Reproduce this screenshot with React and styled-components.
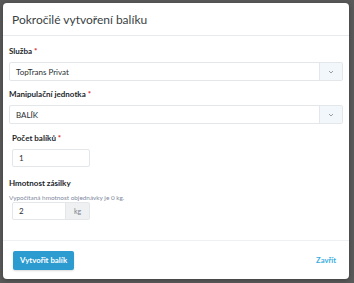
import React from 'react'
import styled, { createGlobalStyle } from 'styled-components'

const Global = createGlobalStyle`
  html, body { margin: 0; padding: 0; }
  body {
    background: #595959;
    font-family: Lato, "Open Sans", "Liberation Sans", sans-serif;
    width: 354px;
    height: 283px;
    overflow: hidden;
  }
`

const Backdrop = styled.div`
  width: 354px;
  height: 283px;
  padding: 3px 5px 4px 3px;
  box-sizing: border-box;
`

const Modal = styled.div`
  background: #fff;
  border-radius: 4px;
  height: 100%;
  display: flex;
  flex-direction: column;
  box-shadow: 0 1px 4px rgba(0,0,0,0.3);
`

const Header = styled.div`
  height: 32px;
  padding: 0 9px;
  display: flex;
  align-items: center;
  border-bottom: 1px solid #e8ebee;
`

const Title = styled.h4`
  margin: 0;
  font-size: 12px;
  font-weight: 400;
  color: #3a3f44;
`

const Body = styled.div`
  flex: 1;
  padding: 10px 6px 0 6px;
  border-bottom: 1px solid #eef0f2;
`

const Group = styled.div`
  margin-bottom: ${p => p.$mb || 8}px;
  padding-left: ${p => (p.$indent ? 3 : 0)}px;
`

const Label = styled.div`
  font-size: 8px;
  font-weight: 700;
  color: #22262a;
  margin-bottom: 6px;
  span { color: #d8282f; }
`

const Help = styled.div`
  font-size: 6.4px;
  color: #7f8a9e;
  margin: 1px 0 1px;
`

const SelectBox = styled.div`
  display: flex;
  height: 19px;
  border: 1px solid #e3e7ea;
  border-radius: 2px;
  box-sizing: border-box;
`

const SelectText = styled.div`
  flex: 1;
  padding-left: 6px;
  font-size: 8px;
  color: #2b2f33;
  display: flex;
  align-items: center;
`

const Caret = styled.div`
  width: 22px;
  background: #f2f7fb;
  border-left: 1px solid #e3e7ea;
  display: flex;
  align-items: center;
  justify-content: center;
`

const InputGroup = styled.div`
  display: flex;
  width: 78px;
  height: 18px;
  margin-left: ${p => (p.$inset ? 3 : 0)}px;
  border: 1px solid #e3e7ea;
  border-radius: 2px;
  box-sizing: border-box;
`

const Input = styled.div`
  flex: 1;
  padding-left: 6px;
  font-size: 8px;
  color: #2b2f33;
  display: flex;
  align-items: center;
`

const Addon = styled.div`
  width: 23px;
  background: #eef0f2;
  border-left: 1px solid #e3e7ea;
  font-size: 7px;
  color: #7b838c;
  display: flex;
  align-items: center;
  justify-content: center;
`

const Footer = styled.div`
  height: 38px;
  padding: 0 13px 0 10px;
  display: flex;
  align-items: center;
  justify-content: space-between;
`

const Primary = styled.button`
  height: 19px;
  padding: 0 7px;
  border: none;
  border-radius: 2px;
  background: #2b9bd0;
  color: #fff;
  font-family: inherit;
  font-size: 7.8px;
  font-weight: 700;
  box-shadow: 0 1px 2px rgba(0,0,0,0.15);
`

const Link = styled.a`
  font-size: 7.6px;
  font-weight: 700;
  color: #3aaee0;
`

const Chevron = () => (
  <svg width="6" height="4" viewBox="0 0 6 4">
    <path d="M1 1l2 2 2-2" fill="none" stroke="#8a94a0" strokeWidth="0.9" />
  </svg>
)

export default function App() {
  return (
    <>
      <Global />
      <Backdrop>
        <Modal>
          <Header>
            <Title>Pokročilé vytvoření balíku</Title>
          </Header>
          <Body>
            <Group>
              <Label>Služba <span>*</span></Label>
              <SelectBox>
                <SelectText>TopTrans Privat</SelectText>
                <Caret><Chevron /></Caret>
              </SelectBox>
            </Group>
            <Group $mb={9}>
              <Label>Manipulační jednotka <span>*</span></Label>
              <SelectBox>
                <SelectText>BALÍK</SelectText>
                <Caret><Chevron /></Caret>
              </SelectBox>
            </Group>
            <Group $indent $mb={11}>
              <Label>Počet balíků <span>*</span></Label>
              <InputGroup>
                <Input>1</Input>
              </InputGroup>
            </Group>
            <Group>
              <Label>Hmotnost zásilky</Label>
              <Help>Vypočítaná hmotnost objednávky je 0 kg.</Help>
              <InputGroup $inset>
                <Input>2</Input>
                <Addon>kg</Addon>
              </InputGroup>
            </Group>
          </Body>
          <Footer>
            <Primary>Vytvořit balík</Primary>
            <Link>Zavřít</Link>
          </Footer>
        </Modal>
      </Backdrop>
    </>
  )
}
